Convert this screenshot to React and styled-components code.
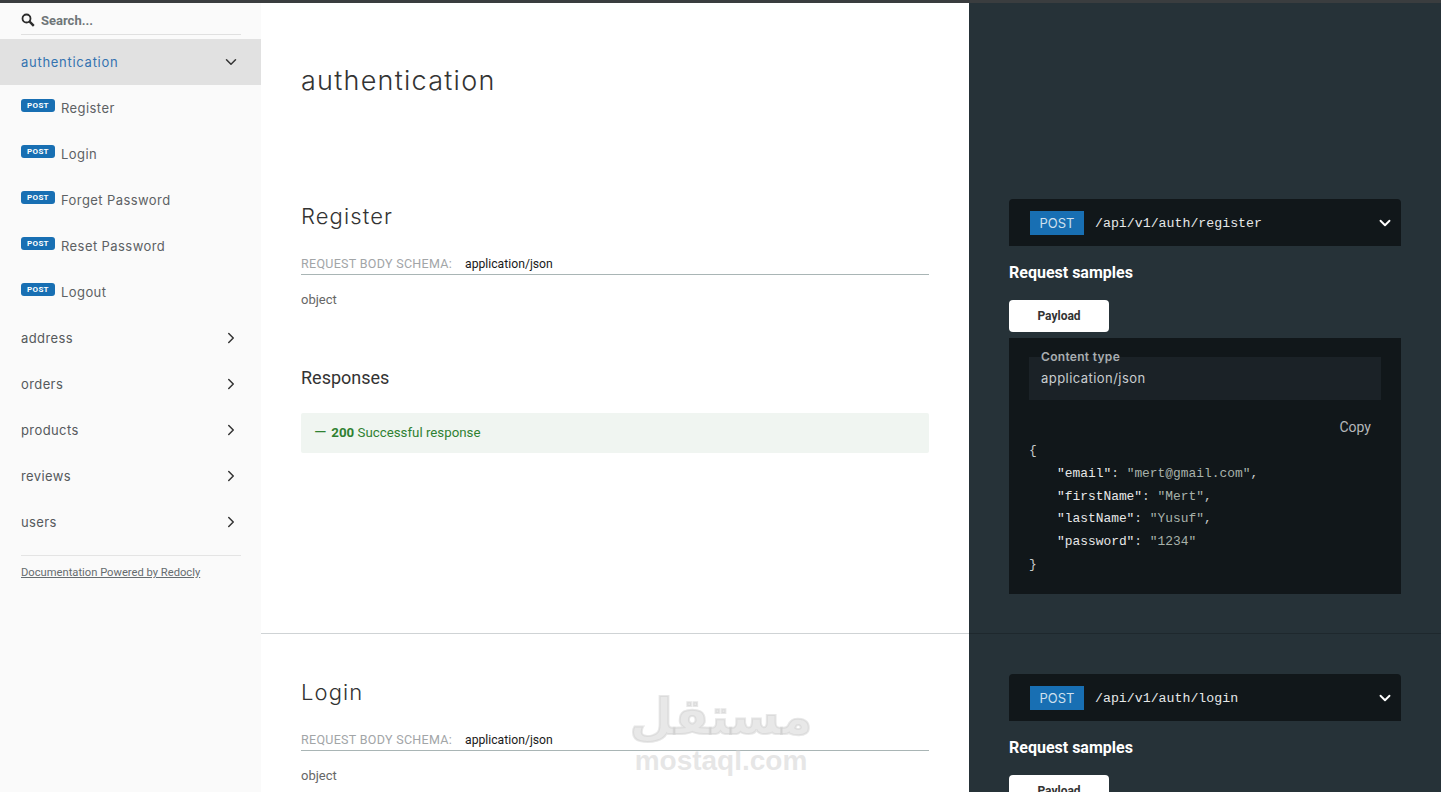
import React from 'react'
import styled, { createGlobalStyle } from 'styled-components'
import { ChevronDown, ChevronRight } from 'lucide-react'

const Global = createGlobalStyle`
  html, body { margin: 0; padding: 0; background: #fff; overflow: hidden; }
  * { box-sizing: border-box; }
`

const heading = '"Inter", "Open Sans", sans-serif'
const body = 'Roboto, sans-serif'
const mono = '"Liberation Mono", monospace'

const SearchIcon = () => (
  <svg width="14" height="14" viewBox="0 0 14 14" fill="none" stroke="#2b2b2b">
    <circle cx="5.5" cy="5.5" r="4" strokeWidth="1.8" />
    <path d="M8.6 8.6 L12.8 12.8" strokeWidth="2.4" />
  </svg>
)

export default function App() {
  return (
    <>
      <Global />
      <Page>
        <Sidebar>
          <SearchRow>
            <SearchIcon />
            <SearchText>Search...</SearchText>
          </SearchRow>
          <MenuRow $active>
            <MenuLabel $active>authentication</MenuLabel>
            <ChevronDown size={18} color="#333" />
          </MenuRow>
          {['Register', 'Login', 'Forget Password', 'Reset Password', 'Logout'].map((name) => (
            <OpRow key={name}>
              <Badge>POST</Badge>
              <OpLabel>{name}</OpLabel>
            </OpRow>
          ))}
          {['address', 'orders', 'products', 'reviews', 'users'].map((name) => (
            <MenuRow key={name}>
              <MenuLabel>{name}</MenuLabel>
              <ChevronRight size={18} color="#333" />
            </MenuRow>
          ))}
          <Footer>
            <FooterLink>Documentation Powered by Redocly</FooterLink>
          </Footer>
        </Sidebar>
        <Content>
          <Section $first>
            <Left $first>
              <GroupTitle>authentication</GroupTitle>
              <OpTitle>Register</OpTitle>
              <SchemaRow>
                <SchemaLabel>REQUEST BODY SCHEMA:</SchemaLabel>
                <SchemaType>application/json</SchemaType>
              </SchemaRow>
              <ObjectText>object</ObjectText>
              <ResponsesTitle>Responses</ResponsesTitle>
              <ResponseBar>
                <Dash>—</Dash> <b>200</b> Successful response
              </ResponseBar>
            </Left>
            <Right $first>
              <EndpointBar>
                <MethodTag>POST</MethodTag>
                <EndpointPath>/api/v1/auth/register</EndpointPath>
                <ChevronDown size={18} color="#fff" strokeWidth={2.5} />
              </EndpointBar>
              <SamplesTitle>Request samples</SamplesTitle>
              <PayloadTab>Payload</PayloadTab>
              <CodePanel>
                <ContentType>
                  <ContentLabel>Content type</ContentLabel>
                  <ContentValue>application/json</ContentValue>
                </ContentType>
                <CopyRow>Copy</CopyRow>
                <Code>
                  <CodeLine>{'{'}</CodeLine>
                  <CodeLine $indent><Key>"email"</Key>: <Str>"mert@gmail.com"</Str>,</CodeLine>
                  <CodeLine $indent><Key>"firstName"</Key>: <Str>"Mert"</Str>,</CodeLine>
                  <CodeLine $indent><Key>"lastName"</Key>: <Str>"Yusuf"</Str>,</CodeLine>
                  <CodeLine $indent><Key>"password"</Key>: <Str>"1234"</Str></CodeLine>
                  <CodeLine>{'}'}</CodeLine>
                </Code>
              </CodePanel>
            </Right>
          </Section>
          <Section>
            <Left>
              <OpTitle>Login</OpTitle>
              <SchemaRow>
                <SchemaLabel>REQUEST BODY SCHEMA:</SchemaLabel>
                <SchemaType>application/json</SchemaType>
              </SchemaRow>
              <ObjectText>object</ObjectText>
            </Left>
            <Right>
              <EndpointBar>
                <MethodTag>POST</MethodTag>
                <EndpointPath>/api/v1/auth/login</EndpointPath>
                <ChevronDown size={18} color="#fff" strokeWidth={2.5} />
              </EndpointBar>
              <SamplesTitle>Request samples</SamplesTitle>
              <PayloadTab>Payload</PayloadTab>
            </Right>
          </Section>
          <Watermark>
            <WatermarkArabic>مستقل</WatermarkArabic>
            <WatermarkLatin>mostaql.com</WatermarkLatin>
          </Watermark>
        </Content>
      </Page>
    </>
  )
}

const Page = styled.div`
  display: flex;
  width: 1441px;
  height: 792px;
  overflow: hidden;
  border-top: 3px solid #3a3d3f;
`

const Sidebar = styled.aside`
  width: 261px;
  flex: none;
  background: #fafafa;
`

const SearchRow = styled.div`
  display: flex;
  align-items: center;
  gap: 6px;
  height: 32px;
  margin: 0 20px 4px 21px;
  padding-top: 3px;
  border-bottom: 1px solid #e0e0e0;
`

const SearchText = styled.span`
  font: 700 13px ${body};
  color: #6f7678;
`

const MenuRow = styled.div`
  display: flex;
  align-items: center;
  justify-content: space-between;
  height: 46px;
  padding: 0 21px;
  background: ${(p) => (p.$active ? '#e1e1e1' : 'transparent')};
`

const MenuLabel = styled.span`
  font: 400 13px ${heading};
  letter-spacing: ${(p) => (p.$active ? '0.72px' : '0.4px')};
  color: ${(p) => (p.$active ? '#3473b0' : '#55595c')};
`

const OpRow = styled.div`
  display: flex;
  align-items: center;
  gap: 6px;
  height: 46px;
  padding-left: 21px;
`

const Badge = styled.span`
  width: 34px;
  height: 13px;
  margin-top: -5px;
  border-radius: 3px;
  background: #186fb3;
  color: #fff;
  font: 700 8px/13px ${body};
  letter-spacing: 0.3px;
  text-align: center;
`

const OpLabel = styled.span`
  font: 400 13px ${heading};
  letter-spacing: 0.42px;
  color: #5d6164;
`

const Footer = styled.div`
  margin: 10px 20px 0 21px;
  padding-top: 6px;
  border-top: 1px solid #e4e4e4;
`

const FooterLink = styled.a`
  font: 400 11.2px ${body};
  color: #666c6f;
  text-decoration: underline;
`

const Content = styled.main`
  position: relative;
  flex: 1;
  min-width: 0;
`

const Section = styled.section`
  display: flex;
  height: ${(p) => (p.$first ? '631px' : 'auto')};
`

const Left = styled.div`
  width: 708px;
  flex: none;
  padding: ${(p) => (p.$first ? '61px' : '45px')} 40px 0;
  background: #fff;
  border-bottom: ${(p) => (p.$first ? '1px solid #cfd3d5' : '0')};
`

const Right = styled.div`
  width: 472px;
  flex: none;
  padding: ${(p) => (p.$first ? '196px' : '40px')} 40px 0;
  background: #263238;
  border-bottom: ${(p) => (p.$first ? '1px solid #1e282d' : '0')};
`

const GroupTitle = styled.h1`
  margin: 0 0 105px;
  font: 300 27px/34px ${heading};
  letter-spacing: 1.25px;
  color: #333;
`

const OpTitle = styled.h2`
  margin: 0 0 23px;
  font: 300 22px/26px ${heading};
  letter-spacing: 1.1px;
  color: #333;
`

const SchemaRow = styled.div`
  display: flex;
  align-items: center;
  height: 23px;
  padding-top: 1px;
  border-bottom: 1px solid #a9b5b5;
`

const SchemaLabel = styled.span`
  width: 164px;
  font: 400 12.5px ${body};
  letter-spacing: 0.3px;
  color: #a2a5a7;
`

const SchemaType = styled.span`
  font: 400 12.2px ${body};
  color: #1a1a1a;
`

const ObjectText = styled.div`
  margin-top: 17px;
  font: 400 13px/16px ${body};
  color: #666;
`

const ResponsesTitle = styled.h3`
  margin: 58px 0 23px;
  font: 400 18px/24px ${body};
  color: #333;
`

const ResponseBar = styled.div`
  height: 40px;
  padding: 0 13px;
  border-radius: 2px;
  background: #f0f5f1;
  color: #2f8132;
  font: 400 13.3px/40px ${body};

  b { font-weight: 700; }
`

const Dash = styled.span`
  display: inline-block;
  width: 14px;
  overflow: hidden;
  font-size: 16px;
  vertical-align: bottom;
`

const EndpointBar = styled.div`
  display: flex;
  align-items: center;
  height: 47px;
  padding: 0 7px 0 21px;
  border-radius: 4px 4px 0 0;
  background: #11171a;
`

const MethodTag = styled.span`
  width: 54px;
  height: 24px;
  background: #186fb3;
  color: #cfe0ee;
  font: 400 13px/24px ${heading};
  text-align: center;
`

const EndpointPath = styled.span`
  flex: 1;
  margin-left: 11px;
  padding-top: 1px;
  font: 400 13.25px ${mono};
  color: #e6e8e8;
`

const SamplesTitle = styled.h3`
  margin: 16px 0 17px;
  font: 700 16px/21px ${body};
  color: #fff;
`

const PayloadTab = styled.div`
  width: 100px;
  height: 32px;
  border-radius: 4px;
  background: #fff;
  color: #333;
  font: 700 12px/32px ${body};
  text-align: center;
`

const CodePanel = styled.div`
  height: 256px;
  margin-top: 6px;
  padding: 19px 20px 0;
  background: #11171a;
`

const ContentType = styled.div`
  position: relative;
  height: 43px;
  padding: 12px 12px 0;
  background: #1b2227;
`

const ContentLabel = styled.span`
  position: absolute;
  top: -8px;
  left: 12px;
  font: 600 12px/16px ${heading};
  letter-spacing: 0.3px;
  color: #a8adb0;
`

const ContentValue = styled.div`
  font: 400 13px/18px ${heading};
  letter-spacing: 0.45px;
  color: #c9cdcf;
`

const CopyRow = styled.div`
  margin-top: 18px;
  padding-right: 10px;
  font: 400 14px/18px ${body};
  color: #b5b8ba;
  text-align: right;
`

const Code = styled.pre`
  margin: 4px 0 0;
  font: 400 12.9px/22.8px ${mono};
  color: #c8cbcc;
`

const CodeLine = styled.div`
  padding-left: ${(p) => (p.$indent ? '28px' : '0')};
`

const Key = styled.span`
  color: #e8e8e8;
`

const Str = styled.span`
  color: #a8b2aa;
`

const Watermark = styled.div`
  position: absolute;
  left: 372px;
  top: 684px;
  width: 176px;
  display: flex;
  flex-direction: column;
  align-items: center;
  pointer-events: none;
`

const WatermarkArabic = styled.div`
  font: 700 50px/60px "DejaVu Sans", sans-serif;
  color: rgba(205, 205, 205, 0.45);
  -webkit-text-stroke: 2px rgba(205, 205, 205, 0.45);
`

const WatermarkLatin = styled.div`
  font: 700 28px/28px "Liberation Sans", sans-serif;
  color: rgba(205, 205, 205, 0.5);
`
